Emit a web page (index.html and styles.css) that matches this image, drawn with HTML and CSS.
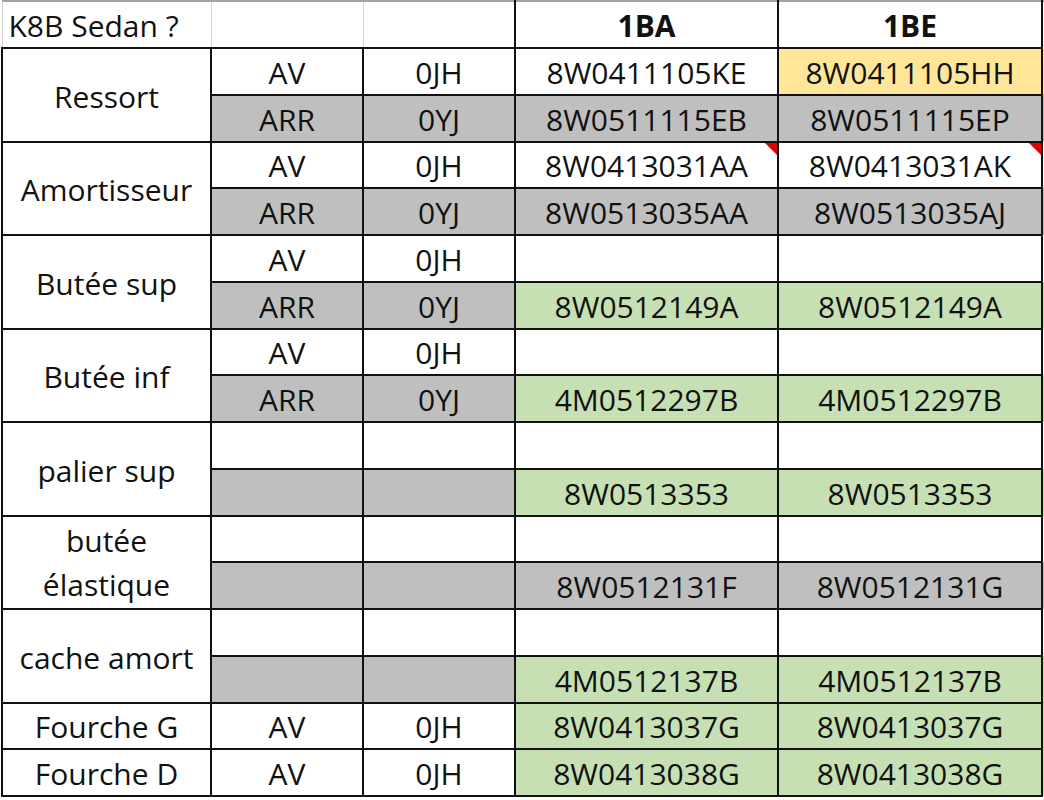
FILE: index.html
```html
<!DOCTYPE html>
<html lang="fr">
<head>
<meta charset="utf-8">
<title>K8B Sedan</title>
<link rel="stylesheet" href="styles.css">
</head>
<body>
<table class="sheet">
  <colgroup>
    <col class="c1"><col class="c2"><col class="c3"><col class="c4"><col class="c5"><col class="c6">
  </colgroup>
  <tr class="head">
    <td class="title">K8B Sedan ?</td>
    <td class="hblank"></td>
    <td class="hblank hlast"></td>
    <td class="hcol">1BA</td>
    <td class="hcol">1BE</td>
    <td class="edge"></td>
  </tr>

  <tr>
    <td class="label" rowspan="2">Ressort</td>
    <td>AV</td><td>0JH</td>
    <td>8W0411105KE</td><td class="yellow">8W0411105HH</td><td class="edge yellow"></td>
  </tr>
  <tr class="sub">
    <td class="gray">ARR</td><td class="gray">0YJ</td>
    <td class="gray">8W0511115EB</td><td class="gray">8W0511115EP</td><td class="edge gray"></td>
  </tr>

  <tr>
    <td class="label" rowspan="2">Amortisseur</td>
    <td>AV</td><td>0JH</td>
    <td class="note">8W0413031AA<span class="flag"></span></td><td class="note">8W0413031AK<span class="flag"></span></td><td class="edge"></td>
  </tr>
  <tr class="sub">
    <td class="gray">ARR</td><td class="gray">0YJ</td>
    <td class="gray">8W0513035AA</td><td class="gray">8W0513035AJ</td><td class="edge gray"></td>
  </tr>

  <tr>
    <td class="label" rowspan="2">Butée sup</td>
    <td>AV</td><td>0JH</td>
    <td></td><td></td><td class="edge"></td>
  </tr>
  <tr class="sub">
    <td class="gray">ARR</td><td class="gray">0YJ</td>
    <td class="green">8W0512149A</td><td class="green">8W0512149A</td><td class="edge green"></td>
  </tr>

  <tr>
    <td class="label" rowspan="2">Butée inf</td>
    <td>AV</td><td>0JH</td>
    <td></td><td></td><td class="edge"></td>
  </tr>
  <tr class="sub">
    <td class="gray">ARR</td><td class="gray">0YJ</td>
    <td class="green">4M0512297B</td><td class="green">4M0512297B</td><td class="edge green"></td>
  </tr>

  <tr>
    <td class="label" rowspan="2">palier sup</td>
    <td></td><td></td>
    <td></td><td></td><td class="edge"></td>
  </tr>
  <tr class="sub">
    <td class="gray"></td><td class="gray"></td>
    <td class="green">8W0513353</td><td class="green">8W0513353</td><td class="edge green"></td>
  </tr>

  <tr>
    <td class="label wrap" rowspan="2">butée élastique</td>
    <td></td><td></td>
    <td></td><td></td><td class="edge"></td>
  </tr>
  <tr class="sub">
    <td class="gray"></td><td class="gray"></td>
    <td class="gray">8W0512131F</td><td class="gray">8W0512131G</td><td class="edge gray"></td>
  </tr>

  <tr>
    <td class="label" rowspan="2">cache amort</td>
    <td></td><td></td>
    <td></td><td></td><td class="edge"></td>
  </tr>
  <tr class="sub">
    <td class="gray"></td><td class="gray"></td>
    <td class="green">4M0512137B</td><td class="green">4M0512137B</td><td class="edge green"></td>
  </tr>

  <tr>
    <td>Fourche G</td>
    <td>AV</td><td>0JH</td>
    <td class="green">8W0413037G</td><td class="green">8W0413037G</td><td class="edge green"></td>
  </tr>
  <tr>
    <td>Fourche D</td>
    <td>AV</td><td>0JH</td>
    <td class="green">8W0413038G</td><td class="green">8W0413038G</td><td class="edge green"></td>
  </tr>
</table>
</body>
</html>
```

FILE: styles.css
```css
html, body {
  margin: 0;
  padding: 0;
  background: #ffffff;
}

.sheet {
  border-collapse: collapse;
  table-layout: fixed;
  width: 1050px;
  margin-left: 1px;
  font-family: "Open Sans", "Liberation Sans", sans-serif;
  font-size: 30px;
  color: #111111;
}

.c1 { width: 209px; }
.c2 { width: 152px; }
.c3 { width: 152px; }
.c4 { width: 263px; }
.c5 { width: 264px; }
.c6 { width: 10px; }

.sheet td {
  border: 2px solid #111111;
  padding: 3px 0 0 0;
  height: 46.75px;
  box-sizing: border-box;
  text-align: center;
  vertical-align: middle;
  line-height: 38px;
  white-space: nowrap;
  overflow: hidden;
}

.sheet tr.head td {
  height: 47px;
  border-top: 2px solid #a3a3a3;
  border-left: 1px solid #d4d4d4;
  border-right: 1px solid #d4d4d4;
}

.sheet tr.head td.hlast { border-right: 2px solid #111111; }
.sheet tr.head td.hcol {
  border-left: 2px solid #111111;
  border-right: 2px solid #111111;
  font-weight: 700;
}

.sheet td.title {
  text-align: left;
  padding-left: 6px;
}

.sheet td.label {
  line-height: 40px;
  padding-top: 4px;
}

.sheet td.wrap {
  white-space: normal;
  line-height: 44px;
  padding: 2px 20px 0;
}

.sheet td.edge {
  border-right: none;
  border-top: none;
  border-bottom: none;
}
.sheet tr.head td.edge {
  border-right: none;
  border-top: 2px solid #a3a3a3;
}

.gray { background: #bfbfbf; }
.green { background: #c6e0b4; }
.yellow { background: #ffe699; }

.sheet td.note { position: relative; }
.flag {
  position: absolute;
  top: 0;
  right: 0;
  width: 0;
  height: 0;
  border-top: 12px solid #e00000;
  border-left: 12px solid transparent;
}
```
